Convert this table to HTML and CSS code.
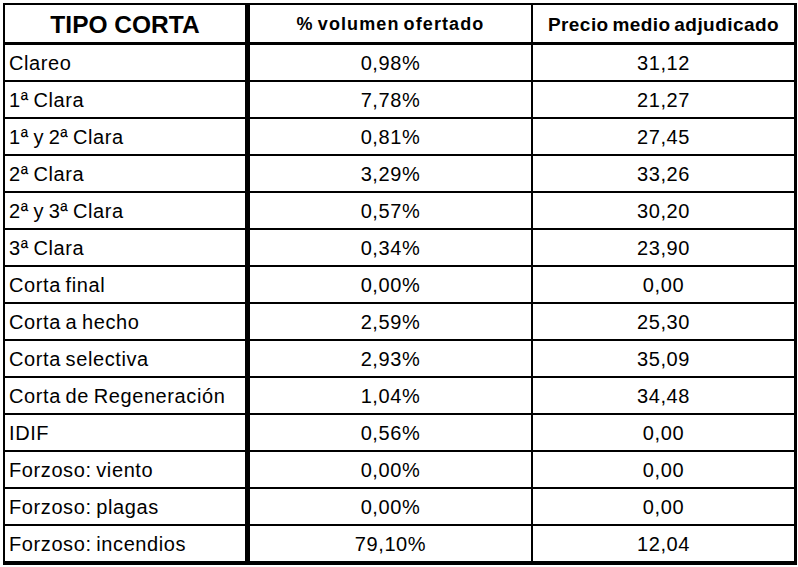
FILE: index.html
```html
<!DOCTYPE html>
<html lang="es">
<head>
<meta charset="utf-8">
<title>Tipo corta</title>
<link rel="stylesheet" href="styles.css">
</head>
<body>
<table class="grid">
  <thead>
    <tr>
      <th class="c1 h-main">TIPO CORTA</th>
      <th class="c2 h-vol">% volumen ofertado</th>
      <th class="c3 h-price">Precio medio adjudicado</th>
    </tr>
  </thead>
  <tbody>
    <tr><td class="c1">Clareo</td><td class="c2">0,98%</td><td class="c3">31,12</td></tr>
    <tr><td class="c1">1ª Clara</td><td class="c2">7,78%</td><td class="c3">21,27</td></tr>
    <tr><td class="c1">1ª y 2ª Clara</td><td class="c2">0,81%</td><td class="c3">27,45</td></tr>
    <tr><td class="c1">2ª Clara</td><td class="c2">3,29%</td><td class="c3">33,26</td></tr>
    <tr><td class="c1">2ª y 3ª Clara</td><td class="c2">0,57%</td><td class="c3">30,20</td></tr>
    <tr><td class="c1">3ª Clara</td><td class="c2">0,34%</td><td class="c3">23,90</td></tr>
    <tr><td class="c1">Corta final</td><td class="c2">0,00%</td><td class="c3">0,00</td></tr>
    <tr><td class="c1">Corta a hecho</td><td class="c2">2,59%</td><td class="c3">25,30</td></tr>
    <tr><td class="c1">Corta selectiva</td><td class="c2">2,93%</td><td class="c3">35,09</td></tr>
    <tr><td class="c1">Corta de Regeneración</td><td class="c2">1,04%</td><td class="c3">34,48</td></tr>
    <tr><td class="c1">IDIF</td><td class="c2">0,56%</td><td class="c3">0,00</td></tr>
    <tr><td class="c1">Forzoso: viento</td><td class="c2">0,00%</td><td class="c3">0,00</td></tr>
    <tr><td class="c1">Forzoso: plagas</td><td class="c2">0,00%</td><td class="c3">0,00</td></tr>
    <tr class="last"><td class="c1">Forzoso: incendios</td><td class="c2">79,10%</td><td class="c3">12,04</td></tr>
  </tbody>
</table>
</body>
</html>
```
FILE: styles.css
```css
html, body {
  margin: 0;
  padding: 0;
  background: #ffffff;
}

body {
  padding: 3px 0 0 3px;
  font-family: "Liberation Sans", Arial, sans-serif;
  color: #000;
}

.grid {
  border-collapse: separate;
  border-spacing: 0;
  table-layout: fixed;
  width: 794px;
  border-top: 2px solid #000;
  border-left: 2px solid #000;
  border-right: 3px solid #000;
  border-bottom: 4px solid #000;
}

.grid th,
.grid td {
  padding: 2px 0 0 0;
  box-sizing: border-box;
  vertical-align: middle;
  border-bottom: 2px solid #000;
  white-space: nowrap;
  overflow: hidden;
}

.grid th {
  height: 40px;
  border-bottom: 3px solid #000;
  font-weight: bold;
  text-align: center;
}

.grid td {
  height: 37px;
  font-size: 20px;
  letter-spacing: 0.6px;
  word-spacing: -1.5px;
}

.grid .last td {
  border-bottom: 0;
  height: 35px;
}

.c1 {
  width: 245px;
  border-right: 5px solid #000;
}

.c2 {
  width: 283px;
  border-right: 2px solid #000;
  text-align: center;
}

.c3 {
  text-align: center;
}

.grid td.c1 {
  text-align: left;
  padding-left: 4px;
}

.h-main {
  font-size: 24.5px;
}

.h-vol {
  font-size: 18px;
  letter-spacing: 1.1px;
  word-spacing: -2px;
}

.h-price {
  font-size: 19px;
  letter-spacing: 0.45px;
  word-spacing: -2px;
}
```
